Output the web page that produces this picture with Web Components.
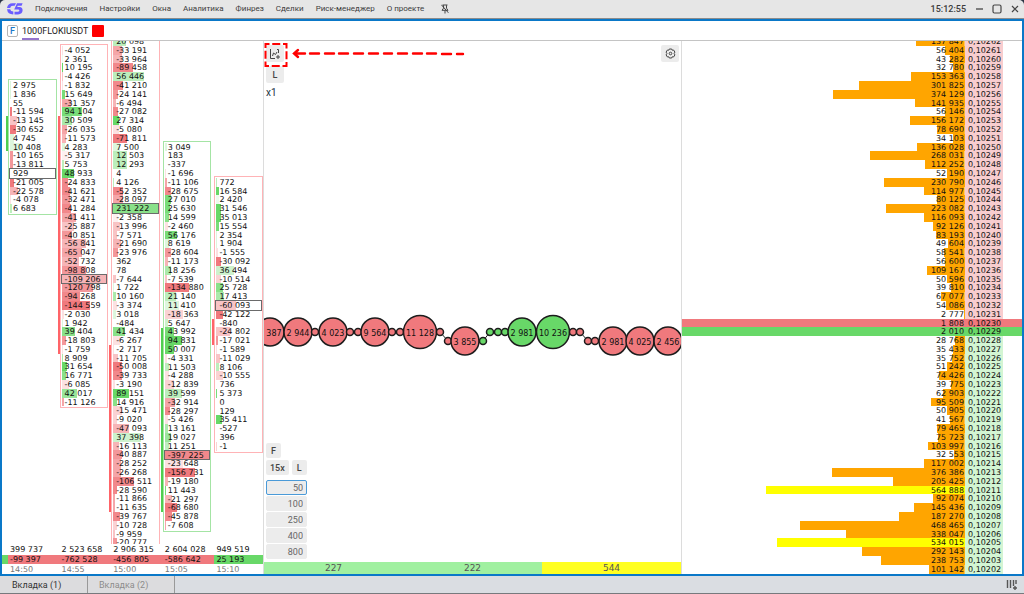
<!DOCTYPE html>
<html lang="ru">
<head>
<meta charset="utf-8">
<title>1000FLOKIUSDT</title>
<style>
	html, body {
		margin: 0;
		background: #2b3444;
	}
	body {
		font-family: Roboto, "Liberation Sans", sans-serif;
		font-size: 9px;
		color: #333;
		/* 61 price levels share the height left by the bars */
		--row: calc((100vh - 57px) / 61);
		--num: "DejaVu Sans", Verdana, sans-serif;
		--red: 240, 121, 125;
		--green: 104, 216, 104;
		--blue: #0a78c8;
	}
</style>
</head>
<body>
<trade-app></trade-app>

<script>
const define = (name, html, setup) => {
	const template = document.createElement('template');
	template.innerHTML = html;
	customElements.define(name, class extends HTMLElement {
		connectedCallback() {
			if (this.shadowRoot) return;
			this.attachShadow({ mode: 'open' });
			this.shadowRoot.append(template.content.cloneNode(true));
			if (setup) setup(this, this.shadowRoot);
		}
	});
};

const group = (n) => String(n).replace(/\B(?=(\d{3})+$)/g, ' ');

// each row: value, bar width, bar strength (0-9), "b" = volume maximum of the candle
const clusters = [
	{
		side: 'green', start: 5, strip: ['green', 9, 12],
		total: '399 737', delta: '-99 397', time: '14:50',
		rows: `2975 1 2,1836 1 2,55 0 0,-11594 2 9,-13145 7 4,-30652 6 9,4745 4 2,10408 11 2,-10165 3 7,-13811 3 7,
			929 0 0 b,-21005 4 9,-22578 8 5,-4078 1 2,6683 2 4`
	},
	{
		side: 'red', start: 1, strip: ['red', 9, 35],
		total: '2 523 658', delta: '-762 528', time: '14:55',
		rows: `-4052 1 2,2361 1 1,10195 1 9,-4426 1 4,-1832 1 2,15649 3 8,-31357 9 6,94104 20 8,30509 10 5,-26035 5 6,
			-11573 4 5,4283 3 2,-5317 7 1,5753 2 4,48933 12 9,-24833 6 8,-41621 8 8,-32471 8 7,-41284 9 8,-41411 14 6,
			-25887 12 4,-40851 10 7,-56841 24 5,-65047 20 6,-52732 17 5,-98808 24 7,-109206 46 5 b,-120798 31 7,-94268 18 8,
			-144559 28 9,-2030 2 2,1942 1 2,39404 13 7,-18803 4 7,-1759 1 2,8909 1 5,31654 5 9,16771 4 7,-6085 7 2,
			42017 15 6,-11126 2 6`
	},
	{
		side: 'red', start: 0, strip: ['red', 35, 53],
		total: '2 906 315', delta: '-456 805', time: '15:00',
		rows: `20098 13 4,-33191 9 6,-33964 9 5,-89458 20 8,56446 31 4,-41210 10 8,-24141 5 7,-6494 3 5,-27082 5 8,
			27314 6 9,-5080 6 2,-71811 14 9,7500 7 2,12503 14 4,12293 14 4,4 0 0,4126 1 4,-52352 10 8,-28097 10 6,
			231222 46 7 b,-2358 5 1,-13996 7 4,-7571 4 4,-21690 8 5,-23976 5 7,362 0 0,78 0 0,-7644 3 4,1722 1 2,
			10160 3 5,-3374 4 2,3018 3 2,-484 0 0,41434 12 7,-6267 7 2,-2717 1 2,-11705 5 4,-50008 9 9,-39733 9 8,
			-3190 2 2,89151 16 9,14916 4 7,-15471 9 3,-9020 4 3,-47093 16 5,37398 28 3,-16113 6 5,-40887 9 7,-28252 8 6,
			-26268 8 6,-106511 21 8,-28590 4 8,-11866 2 6,-11635 2 6,-39767 7 8,-10728 4 3,-9959 2 4,-20777 4 7`
	},
	{
		side: 'green', start: 12, strip: ['green', 33, 53],
		total: '2 604 028', delta: '-586 642', time: '15:05',
		rows: `3049 2 2,183 0 0,-337 0 0,-1696 1 2,-11106 2 6,-28675 6 8,27010 6 8,25630 5 8,14599 4 7,-2460 3 2,
			56176 12 8,8619 4 2,-28604 6 7,-11173 3 5,18256 6 5,-7539 2 4,-134880 24 9,21140 11 4,11410 14 2,-18363 18 3,
			5647 3 3,43992 9 8,94831 17 9,50007 9 9,-4331 2 2,11503 4 4,-4288 4 2,-12839 9 3,39599 17 4,-32914 10 6,
			-28297 5 8,-5426 3 2,13161 3 5,19027 6 6,11251 4 4,-397225 46 8 b,-23648 18 2,-156731 30 9,-19180 3 5,
			11443 1 8,-21297 7 5,-68680 12 9,-45878 7 8,-7608 1 6`
	},
	{
		side: 'red', start: 16, strip: ['red', 32, 34],
		total: '949 519', delta: '25 193', time: '15:10',
		rows: `772 1 4,16584 3 9,2420 3 1,31546 5 9,35013 5 9,15554 3 8,2354 1 2,1904 1 2,-1555 2 2,-30092 5 9,
			36494 18 3,-10514 5 3,25728 7 7,17413 8 5,-60093 20 4 b,-42122 7 9,-840 0 0,-24802 14 4,-17021 2 7,-1589 1 2,
			-11029 4 4,8106 3 4,-10555 7 3,736 0 0,5373 1 8,0 0 0,129 0 0,35411 6 9,-527 0 0,396 0 0,-1 1 3`
	}
];

const firstPrice = 10262;
const volumes = [
	137847, 56404, 43282, 32780, 153363, 301825, 374129, 141935, 56146, 156172, 78690, 34103, 136028, 268031, 112252,
	52190, 230790, 114977, 80125, 223082, 116093, 92126, 83193, 49604, 58541, 56600, 109167, 50596, 39810, 67077, 54086,
	2777, 1808, 2010, 28768, 35433, 35752, 51242, 74426, 39775, 62903, 95509, 50905, 41567, 79465, 75723, 103997, 32553,
	117002, 376386, 205425, 564888, 92074, 145436, 187270, 468465, 338047, 534015, 292143, 238753, 101142
];

// x, y, radius, side, label
const ticks = [
	[6, 291, 14, 'r', '387'], [34, 291, 14, 'r', '2 944'], [51, 291, 3.5, 'r'], [69, 291, 14, 'r', '4 023'],
	[86, 291, 3.5, 'r'], [94, 291, 3.5, 'r'], [111, 291, 14, 'r', '9 564'], [128, 291, 3.5, 'r'], [136, 291, 3.5, 'r'],
	[156, 291, 16.5, 'r', '11 128'], [176, 291, 3.5, 'r'], [184, 300, 3.5, 'r'], [201, 300, 14, 'r', '3 855'],
	[219, 300, 3.5, 'g'], [226, 291, 3.5, 'g'], [234, 291, 3.5, 'g'], [241, 291, 3.5, 'g'], [258, 291, 14, 'g', '2 981'],
	[289, 291, 16.5, 'g', '10 236'], [309, 291, 3.5, 'r'], [316, 291, 3.5, 'r'], [324, 300, 3.5, 'r'],
	[331, 300, 3.5, 'r'], [349, 300, 14, 'r', '2 981'], [376, 300, 14, 'r', '4 025'], [404, 300, 14, 'r', '2 456']
];

define('menu-item', `
<style>
	:host { display: block; }
	button {
		border: 0;
		padding: 0;
		background: none;
		font: inherit;
		font-size: 8px;
		color: inherit;
		line-height: 16px;
		display: block;
	}
</style>
<button type="button"><slot></slot></button>
`);

define('title-bar', `
<style>
	:host {
		display: flex;
		align-items: center;
		height: 18px;
		padding: 0 4px 0 7px;
		background: #e6e6e6;
		border-bottom: 1px solid #8c8c8c;
		border-radius: 5px 5px 0 0;
		color: #3c3c3c;
	}
	nav { display: flex; align-items: center; gap: 12px; margin-left: 12px; }
	.pin { margin-left: 5px; }
	.right { display: flex; align-items: center; margin-left: auto; gap: 8px; }
	time { font-weight: 500; }
	button { border: 0; padding: 0; background: none; display: block; width: 10px; height: 10px; color: inherit; }
	svg { display: block; }
</style>
<svg width="16" height="12" viewBox="0 0 16 12">
	<path fill="#6a5cff" d="M5.5 0.3H9L7.6 2.8H6Q3.5 2.8 3.2 5H0Q0.7 0.3 5.5 0.3zM0 6.2H3.2Q3.5 8.6 6.3 8.6V11.4Q0.7 11.4 0 6.2zM10 0.3H15.6L14.6 2.8H10.7L10.2 4H12.6Q15.6 4.2 15.6 7.3 15.5 11.4 11 11.4H7.5V8.8H11Q12.5 8.7 12.4 7.6 12.4 6.6 11.1 6.6H7.2z"/>
</svg>
<nav>
	<menu-item>Подключения</menu-item>
	<menu-item>Настройки</menu-item>
	<menu-item>Окна</menu-item>
	<menu-item>Аналитика</menu-item>
	<menu-item>Финрез</menu-item>
	<menu-item>Сделки</menu-item>
	<menu-item>Риск-менеджер</menu-item>
	<menu-item>О проекте</menu-item>
	<button class="pin" type="button" aria-label="Закрепить">
		<svg width="8" height="10" viewBox="0 0 8 10" fill="none" stroke="#444" stroke-width="1">
			<path d="M1.5 1h5M2.5 1.2v3L1 6.3h6L5.5 4.2v-3M4 6.5V9.5M0.4 0.8l7 8"/>
		</svg>
	</button>
</nav>
<div class="right">
	<time>15:12:55</time>
	<button type="button" aria-label="Свернуть"><svg width="10" height="10" viewBox="0 0 10 10"><path d="M2 5h7" stroke="#444" stroke-width="1.3"/></svg></button>
	<button type="button" aria-label="Развернуть"><svg width="10" height="10" viewBox="0 0 10 10"><rect x="1" y="1" width="8" height="8" rx="1.5" fill="none" stroke="#444" stroke-width="1.2"/></svg></button>
	<button type="button" aria-label="Закрыть"><svg width="10" height="10" viewBox="0 0 10 10"><path d="M2 2l6 6M8 2l-6 6" stroke="#444" stroke-width="1.2"/></svg></button>
</div>
`);

define('symbol-bar', `
<style>
	:host {
		display: flex;
		align-items: center;
		gap: 4px;
		height: 19px;
		padding-left: 5px;
		border-bottom: 1px solid #c4c4c4;
		background: #fff;
	}
	.type {
		box-sizing: border-box;
		width: 11px;
		height: 12px;
		border: 1px solid #b4b4b4;
		border-radius: 2px;
		color: #1a78c8;
		font-weight: 500;
		line-height: 10px;
		text-align: center;
	}
	.name {
		color: #222;
		line-height: 18px;
		background: linear-gradient(#9575cd, #9575cd) no-repeat 0 100% / 17px 2px;
	}
	.mark { width: 12px; height: 12px; border-radius: 1px; background: #f00; }
</style>
<span class="type">F</span>
<span class="name">1000FLOKIUSDT</span>
<span class="mark"></span>
`);

define('cluster-column', `
<style>
	:host { display: block; position: relative; font: 8px var(--num); color: #111; white-space: nowrap; }
	.box { border: 1px solid #ffb3b6; padding: 1px; }
	.box.green { border-color: #a4e4a4; }
	.row {
		box-sizing: border-box;
		height: var(--row);
		line-height: var(--row);
		padding: 1px 0 0 3px;
		background-repeat: no-repeat;
	}
	.row.max { outline: 1px solid #6b6b6b; }
	.strip { position: absolute; left: -2px; width: 2px; background: #ff6468; }
	.strip.green { background: #4fce4f; }
</style>
<div class="box"></div>
<div class="strip"></div>
`, (host, root) => {
	const data = clusters[host.dataset.index];
	const box = root.querySelector('.box');
	const strip = root.querySelector('.strip');
	box.classList.add(data.side);
	box.style.marginTop = `calc(var(--row) * ${data.start} - 2px)`;
	data.rows.split(',').forEach((item) => {
		const [value, width, level, max] = item.trim().split(' ');
		const row = document.createElement('div');
		const color = `rgba(var(--${value < 0 ? 'red' : 'green'}), ${level / 9})`;
		row.className = max ? 'row max' : 'row';
		row.textContent = group(value);
		row.style.backgroundImage = `linear-gradient(${color}, ${color})`;
		row.style.backgroundSize = `${width}px 100%`;
		box.append(row);
	});
	const [side, from, to] = data.strip;
	strip.classList.add(side);
	strip.style.top = `calc(var(--row) * ${from})`;
	strip.style.height = `calc(var(--row) * ${to - from + 1})`;
});

define('cluster-chart', `
<style>
	:host {
		display: flex;
		flex-direction: column;
		min-width: 0;
		min-height: 0;
		border-right: 1px solid #dcdcdc;
		font: 8px var(--num);
		color: #111;
		text-rendering: geometricPrecision;
	}
	.cols, .line { display: grid; grid-template-columns: repeat(5, minmax(0, 1fr)); column-gap: 3px; padding-left: 6px; }
	.view { flex: 1; min-height: 0; overflow: hidden; }
	.cols { margin-top: -4px; align-items: start; }
	.line { line-height: 9px; white-space: nowrap; }
	.line span { padding-left: 2px; }
	.total { line-height: 11px; }
	.delta { background: rgb(var(--green)); }
	.delta span { background: rgb(var(--red)); margin-right: -3px; }
	.delta span:last-child { background: none; margin: 0; }
	.time { height: 10px; line-height: 12px; color: #777; }
</style>
<div class="view"><div class="cols"></div></div>
<div class="line total"></div>
<div class="line delta"></div>
<div class="line time"></div>
`, (host, root) => {
	clusters.forEach((data, i) => {
		const col = document.createElement('cluster-column');
		col.dataset.index = i;
		root.querySelector('.cols').append(col);
		['total', 'delta', 'time'].forEach((key) => {
			const span = document.createElement('span');
			span.textContent = data[key];
			root.querySelector('.' + key).append(span);
		});
	});
});

define('tool-button', `
<style>
	:host { display: block; }
	button {
		border: 0;
		border-radius: 2px;
		padding: 0 4px;
		min-width: 15px;
		height: 15px;
		background: #ececec;
		color: #444;
		font: 500 9px Roboto, sans-serif;
		display: flex;
		align-items: center;
		justify-content: center;
	}
	:host([big]) button { width: 18px; height: 17px; padding: 0; }
</style>
<button type="button"><slot></slot></button>
`, (host, root) => {
	if (host.title) root.querySelector('button').setAttribute('aria-label', host.title);
});

define('size-input', `
<style>
	:host { display: block; }
	input {
		box-sizing: border-box;
		display: block;
		width: 41px;
		height: 15px;
		border: 1px solid #ececec;
		border-radius: 2px;
		padding: 0 3px;
		background: #ececec;
		color: #666;
		font: 9px Roboto, sans-serif;
		text-align: right;
	}
	:host([active]) input { border-color: #4a9ad8; }
</style>
<input type="text" aria-label="Объём">
`, (host, root) => {
	root.querySelector('input').value = host.getAttribute('value');
});

define('tick-chart', `
<style>
	:host {
		display: flex;
		flex-direction: column;
		position: relative;
		min-width: 0;
		min-height: 0;
		border-right: 1px solid #dcdcdc;
	}
	.plot { position: absolute; inset: 0; width: 100%; height: 100%; }
	.plot text { font: 8px var(--num); fill: #111; text-anchor: middle; }
	.plot circle { stroke: #1c1c1c; stroke-width: 1.5; }
	.r { fill: rgb(var(--red)); }
	.g { fill: rgb(var(--green)); }
	.arrow { position: absolute; left: 0; top: 0; z-index: 1; }
	.tools, .sizes { position: relative; display: flex; padding: 4px 2px 0; }
	.tools { justify-content: space-between; align-items: flex-start; }
	.left { display: flex; flex-direction: column; gap: 4px; }
	.left span { color: #234; font-size: 10px; line-height: 12px; }
	.sizes { flex-direction: column; align-items: flex-start; margin-top: auto; gap: 1px; padding-bottom: 3px; }
	.pair { display: flex; gap: 3px; margin: 1px 0 4px; }
	.bands { position: relative; display: grid; grid-template-columns: repeat(3, 1fr); font: 9px/12px var(--num); color: #555; text-align: center; }
	.bands span { background: #a0f0a0; }
	.bands span:last-child { background: #ff2; }
</style>
<svg class="plot" viewBox="0 0 417 533"></svg>
<div class="tools">
	<div class="left">
		<tool-button big title="Тип графика">
			<svg width="12" height="12" viewBox="0 0 12 12" fill="none" stroke="#444">
				<path d="M1.5 1v9.5H6M3.5 8l1-3 2 1.5L8 4M8 1.5h1.5V5M7 9h4M9 7v4"/>
			</svg>
		</tool-button>
		<tool-button big>L</tool-button>
		<span>x1</span>
	</div>
	<tool-button big title="Настройки">
		<svg width="11" height="11" viewBox="0 0 11 11" fill="none" stroke="#444">
			<path d="M4.3 1h2.4l.5 1.2 1.5-.1 1.2 2-.8 1.4.8 1.4-1.2 2-1.5-.1L6.7 10H4.3l-.5-1.2-1.5.1-1.2-2 .8-1.4-.8-1.4 1.2-2 1.5.1z"/>
			<circle cx="5.5" cy="5.5" r="1.3"/>
		</svg>
	</tool-button>
</div>
<svg class="arrow" width="204" height="28" viewBox="0 0 204 28" fill="none" stroke="#f00" stroke-width="2.4" stroke-linecap="round">
	<rect x="1.5" y="3" width="21" height="22" stroke-linecap="butt" stroke-width="2" stroke-dasharray="8 2.75" stroke-dashoffset="4"/>
	<path d="M34 9L30 12.5 34 16M30 12.5H41M46 12.5H55M61 12.5H70M75 12.5H84M90 12.5H99M105 12.5H114M120 12.5H128M134 12.5H143M149 12.5H158M163 12.5H172M178 13H187M193 13H199"/>
</svg>
<div class="sizes">
	<tool-button>F</tool-button>
	<div class="pair"><tool-button>15x</tool-button><tool-button>L</tool-button></div>
	<size-input value="50" active></size-input>
	<size-input value="100"></size-input>
	<size-input value="250"></size-input>
	<size-input value="400"></size-input>
	<size-input value="800"></size-input>
</div>
<div class="bands"><span>227</span><span>222</span><span>544</span></div>
`, (host, root) => {
	const line = ticks.map(([x, y]) => `${x},${y}`).join(' ');
	root.querySelector('.plot').innerHTML = `<polyline points="${line}" fill="none" stroke="#1c1c1c"/>` +
		ticks.map(([x, y, r, side, label]) => `<circle class="${side}" cx="${x}" cy="${y}" r="${r}"/>` +
			(label ? `<text x="${x < 10 ? x + 4 : x}" y="${y + 4}">${label}</text>` : '')).join('');
});

define('price-ladder', `
<style>
	:host {
		display: block;
		overflow: hidden;
		min-width: 0;
		min-height: 0;
		font: 8px var(--num);
		color: #111;
		text-rendering: geometricPrecision;
	}
	table, tbody { display: block; }
	table { margin-top: -4px; }
	tr { display: flex; height: var(--row); line-height: var(--row); padding-right: 19px; }
	td { box-sizing: border-box; padding: 1px 0 0; white-space: nowrap; }
	.vol {
		flex: 1;
		padding-right: 1px;
		text-align: right;
		background: linear-gradient(#ffa500, #ffa500) no-repeat 100% 0 / calc(100% * var(--v) / 802300) 100%;
	}
	.big .vol { background-image: linear-gradient(#ff0, #ff0); }
	.price { width: 38px; padding-left: 3px; background: #d3f5d3; }
	.ask .price { background: #f8cdcf; }
	.best .vol, .best .price { background: none; }
	.best { background: rgb(var(--green)); }
	.best.ask { background: rgb(var(--red)); }
</style>
<table><tbody></tbody></table>
`, (host, root) => {
	root.querySelector('tbody').innerHTML = volumes.map((v, i) => {
		const price = firstPrice - i;
		const names = [price >= 10230 ? 'ask' : 'bid'];
		if (price === 10230 || price === 10229) names.push('best');
		if (v > 500000) names.push('big');
		return `<tr class="${names.join(' ')}"><td class="vol" style="--v: ${v}">${group(v)}</td><td class="price">0,${price}</td></tr>`;
	}).join('');
});

define('bottom-tabs', `
<style>
	:host { display: flex; height: 17px; background: #dadde2; border-bottom: 1px solid #77797d; }
	button {
		box-sizing: border-box;
		border: 0;
		border-right: 1px solid #999;
		padding: 0 0 0 12px;
		width: 88px;
		background: #dcdcde;
		color: #333;
		font: inherit;
		text-align: left;
	}
	button + button { color: #8c8c8c; width: 87px; padding-left: 11px; }
	.add { width: 12px; margin: 0 6px 0 auto; padding: 0; border: 0; background: none; }
	svg { display: block; }
</style>
<button type="button">Вкладка (1)</button>
<button type="button">Вкладка (2)</button>
<button class="add" type="button" aria-label="Добавить">
	<svg width="12" height="12" viewBox="0 0 12 12" fill="none" stroke="#555">
		<path d="M1.5 1v8M4.5 1v8M7.5 1v6M10 1v4M7 9h4M9 7v4" stroke-width="1.4"/>
	</svg>
</button>
`);

define('trade-app', `
<style>
	:host { display: flex; flex-direction: column; height: 100vh; }
	main { flex: 1; min-height: 0; display: flex; flex-direction: column; border: 2px solid var(--blue); background: #fff; }
	.panes { flex: 1; min-height: 0; display: grid; grid-template-columns: 262fr 418fr 340fr; grid-template-rows: minmax(0, 1fr); }
</style>
<title-bar></title-bar>
<main>
	<symbol-bar></symbol-bar>
	<div class="panes">
		<cluster-chart></cluster-chart>
		<tick-chart></tick-chart>
		<price-ladder></price-ladder>
	</div>
</main>
<bottom-tabs></bottom-tabs>
`);
</script>
</body>
</html>
